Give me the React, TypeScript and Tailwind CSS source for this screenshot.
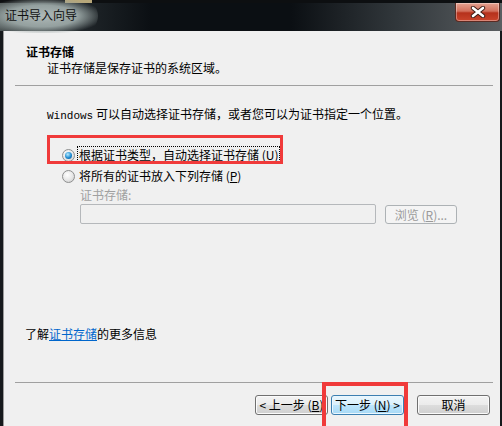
import React from "react";

const Radio = ({ checked }: { checked?: boolean }) => (
  <span className="w-[13px] h-[13px] rounded-full border border-[#8e8f8f] bg-[radial-gradient(circle_at_40%_35%,#ffffff,#e6e6e6_55%,#c4c4c4)] flex items-center justify-center shrink-0">
    {checked && (
      <span className="w-[7px] h-[7px] rounded-full bg-[radial-gradient(circle_at_40%_35%,#b8ecff,#1d8ad0_55%,#0b4a86)]" />
    )}
  </span>
);

const btn =
  "h-[20px] w-[73px] rounded-[3px] border border-[#707070] flex items-center justify-center text-[12px] leading-none text-black shadow-[inset_0_0_0_1px_#fbfbfb] bg-[linear-gradient(#f3f3f3_0%,#ebebeb_50%,#dddddd_50%,#cfcfcf_100%)]";

export default function App() {
  return (
    <div className="relative w-[502px] h-[426px] overflow-hidden bg-[#16191c] flex flex-col font-['Noto_Sans_CJK_SC','Noto_Sans',sans-serif] text-[12px] leading-4 text-black">
      {/* Title bar */}
      <div className="relative h-[31px] shrink-0 bg-[linear-gradient(90deg,#4e5656_0%,#20262a_16%,#0b0f13_30%,#0b0f13_58%,#33393d_80%,#5a5e61_100%)] border-t-[3px] border-[#0d0f11]">
        <div className="absolute left-[65px] top-[-3px] w-[27px] h-[3px] bg-[#b7a77a]" />
        <div className="absolute left-[-14px] top-[-4px] w-[112px] h-[34px] rounded-full bg-[radial-gradient(ellipse_at_center,#aeb8b7_0%,#94a09f_45%,rgba(90,100,102,0)_78%)]" />
        <span className="relative block pl-[5px] pt-[4px] text-[12px] text-[#111]">
          证书导入向导
        </span>
        <div className="absolute right-[2px] top-0 w-[45px] h-[19px] rounded-b-[4px] border border-t-0 border-[#5a2a22] bg-[linear-gradient(#e6a392_0%,#d2705c_45%,#b6311c_55%,#c9452c_100%)] shadow-[inset_0_0_0_1px_rgba(255,255,255,0.35)] flex items-center justify-center">
          <svg width="16" height="12" viewBox="0 0 16 12">
            <path d="M3 2 L13 10 M13 2 L3 10" stroke="#3a1a14" strokeWidth="4.4" strokeLinecap="round" />
            <path d="M3 2 L13 10 M13 2 L3 10" stroke="#ffffff" strokeWidth="2.6" strokeLinecap="round" />
          </svg>
        </div>
      </div>

      {/* Body */}
      <div className="flex-1 flex ml-[3px] mr-[2px]">
        <div className="flex-1 flex flex-col bg-[#f0f0f0] border-l border-[#9a9a9a]">
          <div className="pl-[22px] mt-[13px] font-bold">证书存储</div>
          <div className="pl-[43px]">证书存储是保存证书的系统区域。</div>
          <div className="ml-[11px] mr-[7px] mt-[9px] h-px bg-[#a0a0a0]" />

          <div className="pl-[43px] mt-[20px]">
            <span className="font-['Liberation_Mono',monospace] text-[11px]">Windows</span> 可以自动选择证书存储，或者您可以为证书指定一个位置。
          </div>

          <div className="pl-[58px] mt-[23px] flex items-center gap-[3px]">
            <Radio checked />
            <span className="outline-1 outline-dotted outline-black px-[1px]">
              根据证书类型，自动选择证书存储 (<span className="underline">U</span>)
            </span>
          </div>
          <div className="pl-[58px] mt-[5px] flex items-center gap-[4px]">
            <Radio />
            <span>
              将所有的证书放入下列存储 (<span className="underline">P</span>)
            </span>
          </div>
          <div className="pl-[76px] mt-[3px] text-[#a0a0a0]">证书存储:</div>
          <div className="pl-[76px] mt-[1px] flex items-start gap-[9px]">
            <div className="w-[296px] h-[20px] rounded-[2px] border border-[#b5b8bb] bg-[#f0f0f0]" />
            <div className="mt-[1px] w-[72px] h-[19px] rounded-[3px] border border-[#adb2b5] bg-[#f4f4f4] text-[#9a9a9a] flex items-center justify-center">
              浏览 (<span className="underline">R</span>)...
            </div>
          </div>

          <div className="pl-[21px] mt-[102px]">
            了解<span className="text-[#0066cc] underline">证书存储</span>的更多信息
          </div>

          <div className="ml-[11px] mr-[7px] mt-[40px] h-px bg-[#a0a0a0]" />

          <div className="mt-[12px] flex justify-end pr-[10px]">
            <div className={btn}>
              &lt; 上一步 (<span className="underline">B</span>)
            </div>
            <div className="ml-[3px] h-[20px] w-[73px] rounded-[3px] border border-[#3c7fb1] flex items-center justify-center text-[12px] leading-none shadow-[inset_0_0_0_1px_#eaf7fe] bg-[linear-gradient(#eaf6fd_0%,#d9f0fc_50%,#bee6fd_50%,#a7d9f5_100%)]">
              下一步 (<span className="underline">N</span>) &gt;
            </div>
            <div className={`${btn} ml-[13px]`}>取消</div>
          </div>
        </div>
      </div>

      {/* Red annotation boxes */}
      <div className="absolute left-[47px] top-[135px] w-[236px] h-[29px] border-[3px] border-[#f03a3a]" />
      <div className="absolute left-[322px] top-[382px] w-[86px] h-[50px] border-4 border-[#f03a3a]" />
    </div>
  );
}
